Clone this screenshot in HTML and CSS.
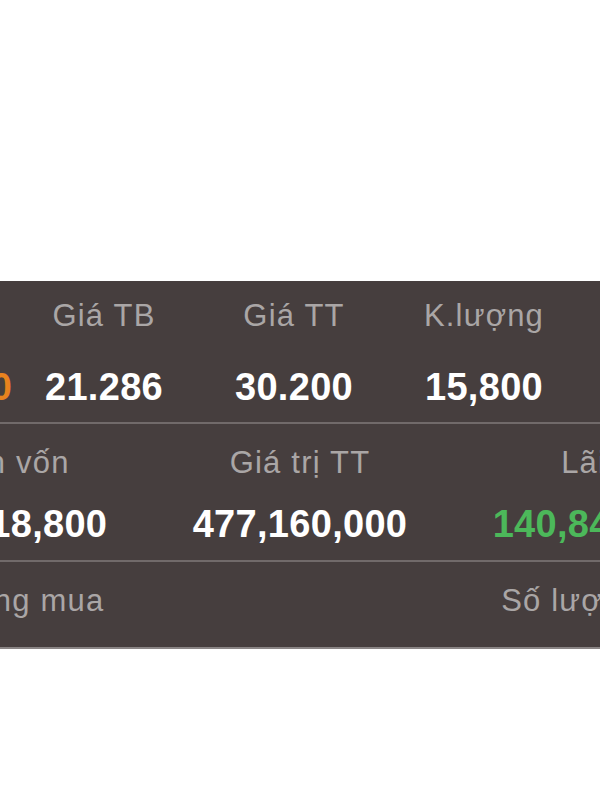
FILE: index.html
```html
<!DOCTYPE html>
<html lang="vi">
<head>
    <meta charset="UTF-8">
    <meta name="viewport" content="width=device-width, initial-scale=1.0">
    <title>Danh mục</title>
    <link rel="stylesheet" href="styles.css">
</head>
<body>
    <div class="top-space"></div>

    <div class="panel">
        <div class="row row-quote">
            <div class="cell">
                <div class="label">Giá vốn</div>
                <div class="value orange">10,250,000</div>
            </div>
            <div class="cell">
                <div class="label">Giá TB</div>
                <div class="value">21.286</div>
            </div>
            <div class="cell">
                <div class="label">Giá TT</div>
                <div class="value">30.200</div>
            </div>
            <div class="cell">
                <div class="label">K.lượng</div>
                <div class="value">15,800</div>
            </div>
        </div>

        <div class="row row-wide">
            <div class="cell">
                <div class="label label-cost">Tiền vốn</div>
                <div class="value">336,318,800</div>
            </div>
            <div class="cell">
                <div class="label">Giá trị TT</div>
                <div class="value">477,160,000</div>
            </div>
            <div class="cell">
                <div class="label label-pnl">Lãi/Lỗ</div>
                <div class="value green">140,841,200</div>
            </div>
        </div>

        <div class="row row-wide row-last">
            <div class="cell">
                <div class="label label-buy">Khối lượng mua</div>
            </div>
            <div class="cell"></div>
            <div class="cell">
                <div class="label label-sell">Số lượng bán</div>
            </div>
        </div>
    </div>
</body>
</html>
```

FILE: styles.css
```css
body {
    margin: 0;
    background: #fff;
    font-family: "Liberation Sans", Arial, sans-serif;
}
.top-space {
    height: 281px;
}
.panel {
    background: #463e3e;
    height: 366px;
    overflow: hidden;
    border-bottom: 2px solid #8a8585;
}
.row {
    display: grid;
    border-bottom: 2px solid #716a6a;
}
.row-quote {
    grid-template-columns: repeat(4, 190px);
    margin-left: -181px;
    height: 141px;
}
.row-wide {
    grid-template-columns: repeat(3, 300px);
    margin-left: -150px;
    height: 136px;
}
.row-last {
    border-bottom: none;
}
.cell {
    text-align: center;
    white-space: nowrap;
}
.label {
    color: #aaa6a6;
    font-size: 31px;
    letter-spacing: 1.2px;
    margin-top: 17px;
}
.value {
    color: #fff;
    font-size: 38px;
    font-weight: bold;
    letter-spacing: 0.3px;
    margin-top: 32px;
}
.row-wide .label {
    margin-top: 21px;
}
.row-wide .value {
    margin-top: 22px;
}
.row-last .label {
    margin-top: 21px;
}
.label-cost {
    padding-left: 12px;
}
.label-pnl {
    padding-left: 14px;
}
.label-buy {
    padding-right: 30px;
}
.label-sell {
    padding-left: 6px;
}
.orange {
    color: #e8821e;
}
.green {
    color: #4cb85a;
}
```
